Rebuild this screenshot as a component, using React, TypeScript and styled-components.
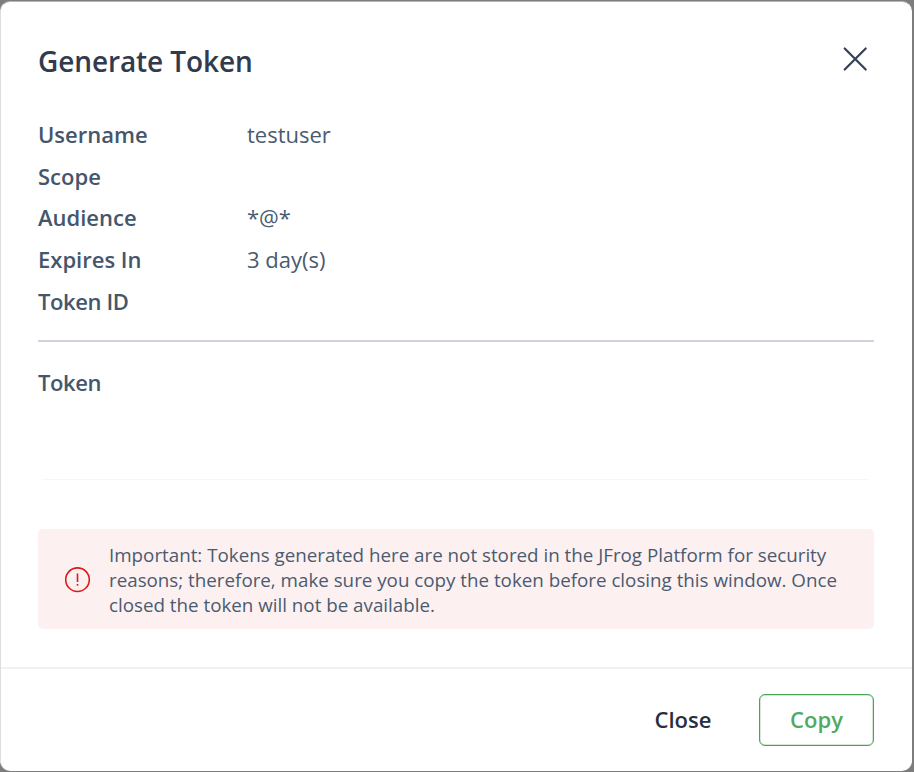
import React from "react";
import styled, { createGlobalStyle } from "styled-components";

const Global = createGlobalStyle`
  * { box-sizing: border-box; }
  html, body, #root { height: 100%; margin: 0; }
  body { background: #7d7d7d; font-family: "Open Sans", "Noto Sans", sans-serif; overflow: hidden; }
`;
const Backdrop = styled.div`
  height: 772px;
  width: 914px;
  padding: 1px 2px 1px 0;
`;
const Dialog = styled.section`
  height: 100%;
  display: flex;
  flex-direction: column;
  background: #fff;
  border-left: 1px solid #dedede;
  border-top: 1px solid #b8b8b8;
  border-radius: 10px;
  overflow: hidden;
  color: #4a5b70;
`;
const Header = styled.header`
  display: flex;
  justify-content: space-between;
  align-items: center;
  height: 111px;
  padding: 6px 44px 0 37px;
`;
const Title = styled.h1`
  margin: 0;
  font-size: 28px;
  font-weight: 600;
  letter-spacing: -0.1px;
  line-height: 38px;
  color: #323b4e;
`;
const IconButton = styled.button`
  display: flex;
  padding: 0;
  margin-bottom: 4px;
  border: 0;
  background: none;
`;
const Details = styled.dl`
  display: grid;
  grid-template-columns: 209px 1fr;
  grid-auto-rows: 41.6px;
  align-items: center;
  margin: 0 38px 0 37px;
  padding-top: 0.35px;
  height: 229px;
  border-bottom: 2px solid #cfd3df;
  font-size: 22px;
`;
const Label = styled.dt<{ $tight?: boolean }>`
  font-weight: 600;
  font-size: 22px;
  letter-spacing: ${(p) => (p.$tight ? "-0.4px" : "0")};
  color: #45566c;
`;
const Value = styled.dd`
  margin: 0;
`;
const TokenBox = styled.div`
  height: 138px;
  margin: 0 43px 0 41px;
  border-bottom: 1px solid #f7f7f7;
`;
const TokenLabel = styled(Label).attrs({ as: "div" })`
  margin-left: -4px;
  padding-top: 25px;
  line-height: 30px;
`;
const Alert = styled.div`
  display: flex;
  align-items: center;
  gap: 18px;
  height: 100px;
  margin: 49px 38px 0 37px;
  padding-left: 26px;
  background: #fdf0f1;
  border-radius: 5px;
`;
const Message = styled.p`
  margin: 1px 0 0;
  font-size: 18.77px;
  line-height: 25px;
  white-space: nowrap;
`;
const Footer = styled.footer`
  display: flex;
  flex: 1;
  align-items: center;
  justify-content: flex-end;
  gap: 17px;
  margin-top: 38px;
  padding-right: 38px;
  border-top: 2px solid #f1f1f3;
`;
const Button = styled.button<{ $outlined?: boolean }>`
  height: 52px;
  width: ${(p) => (p.$outlined ? 115 : 118)}px;
  padding: 0 0 2px;
  font: 600 22px "Open Sans", sans-serif;
  border: ${(p) => (p.$outlined ? "1px solid #45a655" : "0")};
  box-shadow: ${(p) => (p.$outlined ? "inset 0 0 0 0.5px #45a65580" : "none")};
  border-radius: 6px;
  background: none;
  color: ${(p) => (p.$outlined ? "#50aa5f" : "#272e42")};
`;

const rows = [["Username", "testuser"], ["Scope", ""], ["Audience", "*@*"], ["Expires In", "3 day(s)"], ["Token ID", ""]];

export default function App() {
  return (
    <Backdrop>
      <Global />
      <Dialog>
        <Header>
          <Title>Generate Token</Title>
          <IconButton aria-label="Dismiss">
            <svg width="26" height="26" viewBox="0 0 26 26" fill="none" stroke="#344055" strokeWidth="2.2" strokeLinecap="round"><path d="M2.7 2.5 23.7 23.5M23.7 2.5 2.7 23.5" /></svg>
          </IconButton>
        </Header>
        <Details>
          {rows.map(([k, v]) => (
            <React.Fragment key={k}><Label $tight={k === "Token ID"}>{k}</Label><Value>{v}</Value></React.Fragment>
          ))}
        </Details>
        <TokenBox><TokenLabel $tight>Token</TokenLabel></TokenBox>
        <Alert>
          <svg width="27" height="27" viewBox="0 0 27 27" fill="none" stroke="#e01818" strokeWidth="1.6"><circle cx="13.5" cy="13.7" r="11.8" /><path d="M13.5 7.5V16M13.5 18V19.8" /></svg>
          <Message>
            Important: Tokens generated here are not stored in the JFrog Platform for security<br />
            reasons; therefore, make sure you copy the token before closing this window. Once<br />
            closed the token will not be available.
          </Message>
        </Alert>
        <Footer>
          <Button>Close</Button>
          <Button $outlined>Copy</Button>
        </Footer>
      </Dialog>
    </Backdrop>
  );
}
